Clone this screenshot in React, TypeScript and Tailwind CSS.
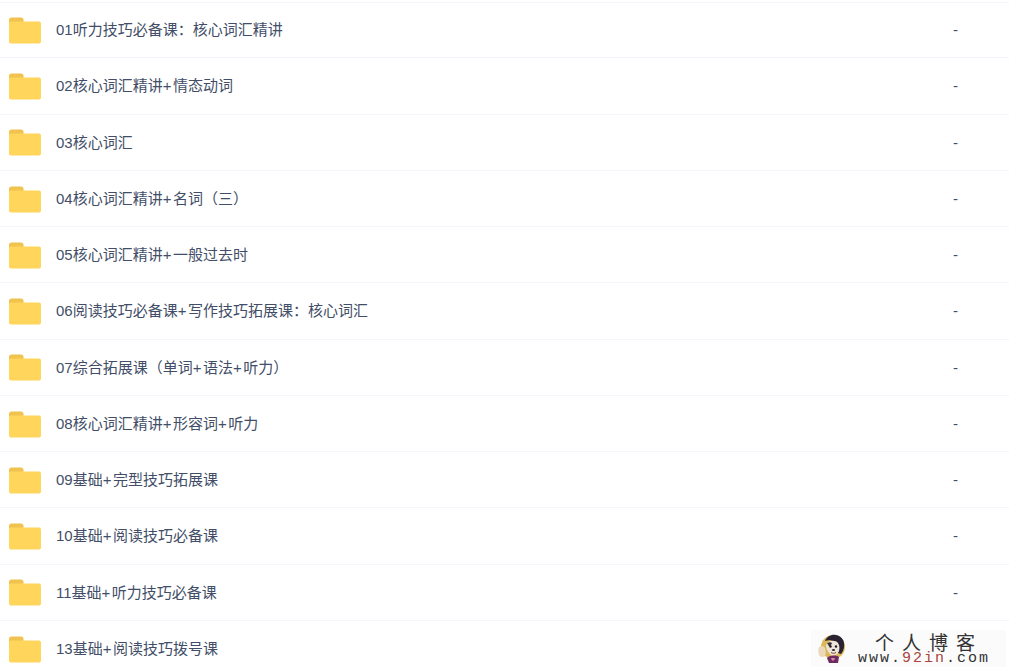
const FOLDERS = [
  "01听力技巧必备课\uFF1A核心词汇精讲",
  "02核心词汇精讲+情态动词",
  "03核心词汇",
  "04核心词汇精讲+名词\uFF08三\uFF09",
  "05核心词汇精讲+一般过去时",
  "06阅读技巧必备课+写作技巧拓展课\uFF1A核心词汇",
  "07综合拓展课\uFF08单词+语法+听力\uFF09",
  "08核心词汇精讲+形容词+听力",
  "09基础+完型技巧拓展课",
  "10基础+阅读技巧必备课",
  "11基础+听力技巧必备课",
  "13基础+阅读技巧拨号课",
];

function FolderIcon() {
  return (
    <svg width="32" height="27" viewBox="0 0 32 27" className="shrink-0">
      <path d="M0 3a2.500 2.500 0 0 1 2.500-2.500h9.500a2.500 2.500 0 0 1 2.500 2.500v3H0z" fill="#f0c24e" />
      <path d="M0 6.500a2 2 0 0 1 2-2h28a2 2 0 0 1 2 2V24.500a2 2 0 0 1-2 2H2a2 2 0 0 1-2-2z" fill="#ffd65b" />
    </svg>
  );
}

function Avatar() {
  return (
    <svg width="27" height="29" viewBox="0 0 27 29" className="shrink-0">
      <circle cx="15" cy="13" r="12" fill="#dcb858" />
      <path d="M7 7c2-5 7-7 11-6 6 1 9 6 8 12-.3 3-1.500 5-3 7l-3-1c1-5 0-9-3-11-3-2-7-2-10-1z" fill="#2a2230" />
      <path d="M9 9c3-3 9-3 11 0 2 3 2 8-1 11-2 2-5 2-7 0-3-3-5-8-3-11z" fill="#ece6da" />
      <path d="M9 9c2-1 4-1 5 0l-2 4c-1-1-2-2-3-4z" fill="#3a3038" />
      <circle cx="12.500" cy="12.500" r="1.200" fill="#1f1a20" />
      <circle cx="18" cy="12.500" r="1.200" fill="#1f1a20" />
      <ellipse cx="15.500" cy="16" rx="1.600" ry="1.100" fill="#2a2230" />
      <path d="M13 18.500c1.500 1 3.500 1 5 0" stroke="#8a3b2e" strokeWidth="1" fill="none" />
      <path d="M9 24c3-3 9-3 12-1l-1 6H11z" fill="#6d2b62" />
      <path d="M13 24h4l-1 2.500h-2z" fill="#d98aa8" />
      <path d="M1 13c2-2 5-1 6 1 1 3 1 6 0 8-2 2-5 1-6-1-1-3-1-6 0-8z" fill="#ecd9bc" />
    </svg>
  );
}

// the plus sign is a touch wider in the reference font
function FolderName({ name }: { name: string }) {
  const parts = name.split("+");
  return (
    <span className="ml-[15px] flex-1 text-[15px] text-[#424e67]">
      {parts.map((part, i) => (
        <span key={i}>
          {part}
          {i < parts.length - 1 && <span className="tracking-[1.5px]">+</span>}
        </span>
      ))}
    </span>
  );
}

export default function App() {
  return (
    <div className="relative w-[1009px] h-[671px] overflow-hidden bg-white font-['Liberation_Sans','Noto_Sans_CJK_SC',sans-serif]">
      <ul className="mt-[2.1px]">
        {FOLDERS.map((name, i) => (
          <li
            key={name}
            className="flex items-center h-[56.25px] pt-[1.2px] pl-[9px] border-b border-[#f5f5fb] first:shadow-[inset_0_1px_0_#f5f5fb]"
          >
            <FolderIcon />
            <FolderName name={name} />
            {i < FOLDERS.length - 1 && (
              <span className="w-[56px] text-[15px] text-[#424e67]">-</span>
            )}
          </li>
        ))}
      </ul>

      <div className="absolute left-[811px] top-[630px] w-[195px] h-[37px] bg-[#fbfbfb] flex items-center pl-[7px]">
        <Avatar />
        <div className="ml-[13px] pt-[2px] flex flex-col items-start text-[#333333]">
          <span className="ml-[17px] text-[19px] leading-[18px] tracking-[8px] font-['Noto_Sans_CJK_SC',sans-serif] whitespace-nowrap">
            个人博客
          </span>
          <span className="text-[15px] leading-[16px] tracking-[2px] whitespace-nowrap font-['Liberation_Mono',monospace]">
            www.<span className="text-[#a8443c]">92in</span>.com
          </span>
        </div>
      </div>
    </div>
  );
}
